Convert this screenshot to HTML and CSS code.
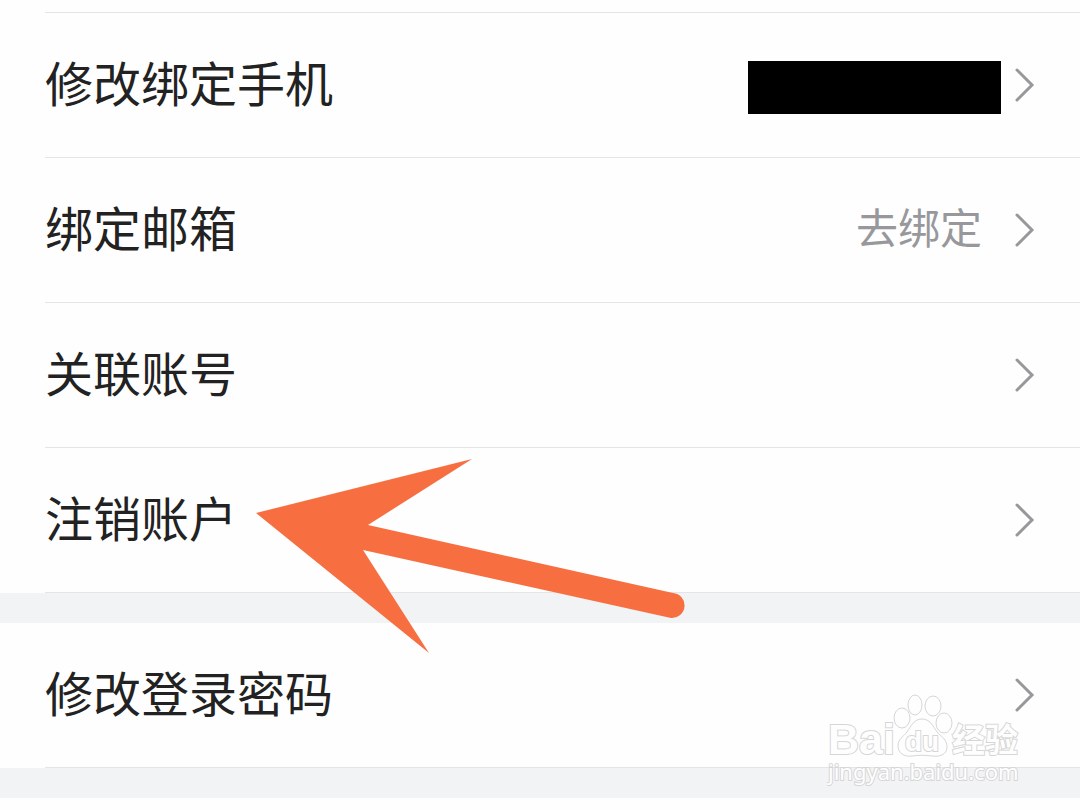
FILE: index.html
```html
<!DOCTYPE html>
<html lang="zh-CN">
<head>
  <meta charset="UTF-8" />
  <meta name="viewport" content="width=device-width, initial-scale=1" />
  <title>账号设置</title>
  <link rel="stylesheet" href="styles.css">
</head>
<body>

  <main class="settings">
    <ul class="group group-first">
      <li>
        <a class="row" href="#phone">
          <span class="label">修改绑定手机</span>
          <svg class="chevron" viewBox="0 0 22 36"><path d="M3 3 L18 18 L3 33" /></svg>
          <span class="mask"></span>
        </a>
      </li>
      <li>
        <a class="row" href="#email">
          <span class="label">绑定邮箱</span>
          <span class="value">去绑定</span>
          <svg class="chevron" viewBox="0 0 22 36"><path d="M3 3 L18 18 L3 33" /></svg>
        </a>
      </li>
      <li>
        <a class="row" href="#linked">
          <span class="label">关联账号</span>
          <svg class="chevron" viewBox="0 0 22 36"><path d="M3 3 L18 18 L3 33" /></svg>
        </a>
      </li>
      <li>
        <a class="row" href="#close">
          <span class="label">注销账户</span>
          <svg class="chevron" viewBox="0 0 22 36"><path d="M3 3 L18 18 L3 33" /></svg>
        </a>
      </li>
    </ul>

    <div class="gap"></div>

    <ul class="group">
      <li>
        <a class="row" href="#password">
          <span class="label">修改登录密码</span>
          <svg class="chevron" viewBox="0 0 22 36"><path d="M3 3 L18 18 L3 33" /></svg>
        </a>
      </li>
    </ul>

    <div class="gap"></div>

    <!-- arrow pointing at 注销账户 -->
    <svg class="arrow" viewBox="0 0 432 196">
      <path d="M0 54 L216 0 L112 66 L417 134 A12.5 12.5 0 0 1 415 159 L107 91 L173 194 Z" />
    </svg>

    <!-- watermark -->
    <svg class="watermark" viewBox="0 0 200 100">
      <text class="wm-latin" x="1" y="64">Bai</text>
      <ellipse cx="75" cy="28" rx="8" ry="10" />
      <ellipse cx="88" cy="15" rx="7" ry="10" />
      <ellipse cx="106" cy="16" rx="8" ry="10" />
      <ellipse cx="117" cy="33" rx="8" ry="10" />
      <path d="M95 29 C103 29 106 36 110 42 C115 47 120 50 120 57 C120 65 112 67 105 66 C97 65 92 65 85 66 C77 67 71 63 71 56 C71 49 76 47 80 42 C84 36 87 29 95 29 Z" />
      <text class="wm-du" x="78" y="61">du</text>
      <text class="wm-cjk" x="125" y="62">经验</text>
      <text class="wm-url" x="1" y="90">jingyan.baidu.com</text>
    </svg>
  </main>

</body>
</html>
```

FILE: styles.css
```css
body {
  margin: 0;
  background: #fefefe;
  color: #222;
  font-family: "Noto Sans CJK SC", sans-serif;
}
.settings {
  position: relative;
  padding-top: 12px;
}
.group {
  list-style: none;
  margin: 0 0 0 45px;
  padding: 0;
}
.group-first {
  border-top: 1px solid #e5e5e6;
}
.group li {
  border-bottom: 1px solid #e5e5e6;
}
.row {
  position: relative;
  display: flex;
  align-items: center;
  height: 144px;
  padding-right: 44px;
  color: inherit;
  text-decoration: none;
}
.label,
.value {
  padding-bottom: 8px;
  line-height: 72px;
}
.label {
  flex: 1;
  font-size: 48px;
}
.value {
  margin-right: 32px;
  font-size: 42px;
  color: #98989c;
}
.chevron {
  width: 22px;
  height: 36px;
  fill: none;
  stroke: #98989c;
  stroke-width: 3;
  stroke-linecap: round;
}
/* hides the phone number */
.mask {
  position: absolute;
  top: 48px;
  right: 79px;
  width: 253px;
  height: 53px;
  background: #000;
}
.gap {
  height: 30px;
  background: #f2f3f5;
}
.arrow {
  position: absolute;
  top: 459px;
  left: 256px;
  width: 432px;
  height: 196px;
  fill: #f76f40;
  pointer-events: none;
}
.watermark {
  position: absolute;
  top: 690px;
  right: 53px;
  width: 200px;
  height: 100px;
  fill: #fefefe;
  stroke: #d6d6d6;
  stroke-width: 1;
  pointer-events: none;
}
.watermark text {
  paint-order: stroke;
  stroke-width: 2;
}
.wm-latin {
  font: bold 43px "Liberation Sans", sans-serif;
}
.wm-du {
  font: bold 28px "Liberation Sans", sans-serif;
}
.wm-cjk {
  font: bold 33px "Noto Sans CJK SC", sans-serif;
}
.wm-url {
  font: 22px "Noto Sans", sans-serif;
}
```
